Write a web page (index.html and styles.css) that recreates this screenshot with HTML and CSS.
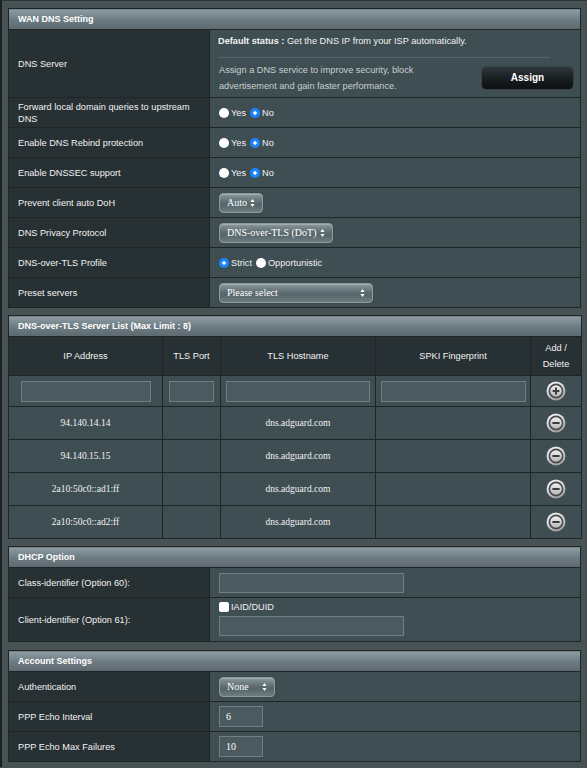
FILE: index.html
```html
<!DOCTYPE html>
<html>
<head>
<meta charset="utf-8">
<link rel="stylesheet" href="styles.css">
</head>
<body>
<div class="page">

  <table class="form">
    <colgroup><col class="c-label"><col></colgroup>
    <tr><th colspan="2" class="sec-head">WAN DNS Setting</th></tr>
    <tr class="dns-row">
      <td class="label">DNS Server</td>
      <td class="value dns-value">
        <div class="status"><b>Default status :</b> Get the DNS IP from your ISP automatically.</div>
        <div class="assign-row">
          <div class="desc">Assign a DNS service to improve security, block<br>advertisement and gain faster performance.</div>
          <button class="assign">Assign</button>
        </div>
      </td>
    </tr>
    <tr>
      <td class="label">Forward local domain queries to upstream DNS</td>
      <td class="value"><span class="radio"></span><span class="opt">Yes</span><span class="radio on"></span><span class="opt">No</span></td>
    </tr>
    <tr>
      <td class="label">Enable DNS Rebind protection</td>
      <td class="value"><span class="radio"></span><span class="opt">Yes</span><span class="radio on"></span><span class="opt">No</span></td>
    </tr>
    <tr>
      <td class="label">Enable DNSSEC support</td>
      <td class="value"><span class="radio"></span><span class="opt">Yes</span><span class="radio on"></span><span class="opt">No</span></td>
    </tr>
    <tr>
      <td class="label">Prevent client auto DoH</td>
      <td class="value"><span class="select w-auto">Auto<svg class="arr" width="5" height="8" viewBox="0 0 5 8"><path d="M2.5 0L4.6 3H0.4z M2.5 8L4.6 5H0.4z" fill="#fff"/></svg></span></td>
    </tr>
    <tr>
      <td class="label">DNS Privacy Protocol</td>
      <td class="value"><span class="select w-dot">DNS-over-TLS (DoT)<svg class="arr" width="5" height="8" viewBox="0 0 5 8"><path d="M2.5 0L4.6 3H0.4z M2.5 8L4.6 5H0.4z" fill="#fff"/></svg></span></td>
    </tr>
    <tr>
      <td class="label">DNS-over-TLS Profile</td>
      <td class="value"><span class="radio on"></span><span class="opt">Strict</span><span class="radio"></span><span class="opt">Opportunistic</span></td>
    </tr>
    <tr>
      <td class="label">Preset servers</td>
      <td class="value"><span class="select w-preset">Please select<svg class="arr" width="5" height="8" viewBox="0 0 5 8"><path d="M2.5 0L4.6 3H0.4z M2.5 8L4.6 5H0.4z" fill="#fff"/></svg></span></td>
    </tr>
  </table>

  <table class="list">
    <colgroup><col class="l1"><col class="l2"><col class="l3"><col class="l4"><col class="l5"></colgroup>
    <tr><th colspan="5" class="sec-head">DNS-over-TLS Server List (Max Limit : 8)</th></tr>
    <tr class="list-head">
      <td>IP Address</td><td>TLS Port</td><td>TLS Hostname</td><td>SPKI Fingerprint</td><td class="adddel">Add /<br>Delete</td>
    </tr>
    <tr class="input-row">
      <td><span class="field f-ip"></span></td>
      <td><span class="field f-port"></span></td>
      <td><span class="field f-host"></span></td>
      <td><span class="field f-spki"></span></td>
      <td><svg class="btn-icon" width="20" height="20" viewBox="0 0 20 20"><use href="#plus"/></svg></td>
    </tr>
    <tr class="data-row"><td>94.140.14.14</td><td></td><td>dns.adguard.com</td><td></td><td><svg class="btn-icon" width="20" height="20" viewBox="0 0 20 20"><use href="#minus"/></svg></td></tr>
    <tr class="data-row"><td>94.140.15.15</td><td></td><td>dns.adguard.com</td><td></td><td><svg class="btn-icon" width="20" height="20" viewBox="0 0 20 20"><use href="#minus"/></svg></td></tr>
    <tr class="data-row"><td>2a10:50c0::ad1:ff</td><td></td><td>dns.adguard.com</td><td></td><td><svg class="btn-icon" width="20" height="20" viewBox="0 0 20 20"><use href="#minus"/></svg></td></tr>
    <tr class="data-row"><td>2a10:50c0::ad2:ff</td><td></td><td>dns.adguard.com</td><td></td><td><svg class="btn-icon" width="20" height="20" viewBox="0 0 20 20"><use href="#minus"/></svg></td></tr>
  </table>

  <table class="form dhcp">
    <colgroup><col class="c-label"><col></colgroup>
    <tr><th colspan="2" class="sec-head">DHCP Option</th></tr>
    <tr>
      <td class="label">Class-identifier (Option 60):</td>
      <td class="value"><span class="field f-dhcp"></span></td>
    </tr>
    <tr class="client-row">
      <td class="label">Client-identifier (Option 61):</td>
      <td class="value">
        <div class="check-line"><span class="checkbox"></span><span class="opt">IAID/DUID</span></div>
        <span class="field f-dhcp"></span>
      </td>
    </tr>
  </table>

  <table class="form">
    <colgroup><col class="c-label"><col></colgroup>
    <tr><th colspan="2" class="sec-head">Account Settings</th></tr>
    <tr>
      <td class="label">Authentication</td>
      <td class="value"><span class="select w-none">None<svg class="arr" width="5" height="8" viewBox="0 0 5 8"><path d="M2.5 0L4.6 3H0.4z M2.5 8L4.6 5H0.4z" fill="#fff"/></svg></span></td>
    </tr>
    <tr>
      <td class="label">PPP Echo Interval</td>
      <td class="value"><span class="field f-num">6</span></td>
    </tr>
    <tr>
      <td class="label">PPP Echo Max Failures</td>
      <td class="value"><span class="field f-num">10</span></td>
    </tr>
  </table>

</div>

<svg class="defs" width="0" height="0">
  <defs>
    <radialGradient id="g-outer" cx="40%" cy="30%" r="75%">
      <stop offset="0" stop-color="#ffffff"/>
      <stop offset="0.6" stop-color="#d6d6d6"/>
      <stop offset="1" stop-color="#8e8e8e"/>
    </radialGradient>
    <linearGradient id="g-inner" x1="0" y1="0" x2="0" y2="1">
      <stop offset="0" stop-color="#f4f4f4"/>
      <stop offset="1" stop-color="#b4b4b4"/>
    </linearGradient>
    <g id="plus">
      <circle cx="10" cy="10" r="9.5" fill="url(#g-outer)"/>
      <circle cx="10" cy="10" r="6.6" fill="url(#g-inner)" stroke="#4a4a4a" stroke-width="1.6"/>
      <path d="M6.6 10H13.4M10 6.6V13.4" stroke="#3c3c3c" stroke-width="2"/>
    </g>
    <g id="minus">
      <circle cx="10" cy="10" r="9.5" fill="url(#g-outer)"/>
      <circle cx="10" cy="10" r="6.6" fill="url(#g-inner)" stroke="#4a4a4a" stroke-width="1.6"/>
      <path d="M6.4 10H13.6" stroke="#3c3c3c" stroke-width="2"/>
    </g>
  </defs>
</svg>
</body>
</html>
```

FILE: styles.css
```css
html, body {
  margin: 0;
  padding: 0;
}
body {
  background: #475255;
  font-family: "Liberation Sans", Arial, sans-serif;
  font-size: 9.2px;
  color: #f2f2f2;
  width: 587px;
  height: 768px;
  overflow: hidden;
}
.page {
  border-left: 2px solid #1c2123;
  border-top: 1px solid #2b3336;
  padding: 7px 0 0 6px;
  height: 767px;
  box-sizing: border-box;
}
table {
  width: 573px;
  border-collapse: collapse;
  table-layout: fixed;
  border: 1px solid #1f2527;
  margin-bottom: 7px;
}
table.dhcp { margin-bottom: 8px; }
.c-label { width: 201px; }
.sec-head {
  height: 20px;
  padding: 0 0 0 9px;
  text-align: left;
  font-weight: bold;
  font-size: 9px;
  color: #ffffff;
  background: linear-gradient(#8d9ca2, #6b7a80 55%, #5c6a70);
  border-bottom: 1px solid #1f2527;
}
td {
  padding: 0;
  vertical-align: middle;
}
.form td {
  height: 29px;
  border-bottom: 1px solid #1f2527;
}
.label {
  background: #273033;
  padding: 0 6px 0 9px;
  border-right: 1px solid #1f2527;
  line-height: 12px;
}
.value {
  background: #3e4e53;
  padding-left: 9px;
}
.dns-row td { height: 67px; }
.dns-value {
  padding: 0 6px 0 8px;
  vertical-align: top;
}
.status {
  height: 27px;
  line-height: 23px;
  border-bottom: 1px solid #56656a;
  margin-right: 24px;
  margin-left: 0;
  white-space: nowrap;
}
.assign-row {
  display: flex;
  justify-content: space-between;
  align-items: center;
  height: 39px;
  padding-left: 1px;
}
.desc {
  color: #c9cfd0;
  line-height: 16px;
}
.assign {
  width: 93px;
  height: 24px;
  border-radius: 5px;
  border: 1px solid #3a4346;
  background: linear-gradient(#30383b, #161b1d 60%, #0d1011);
  color: #ffffff;
  font-family: "Liberation Sans", Arial, sans-serif;
  font-weight: bold;
  font-size: 10px;
  padding: 0;
}
.radio {
  display: inline-block;
  width: 10px;
  height: 10px;
  border-radius: 50%;
  background: #ffffff;
  vertical-align: -2px;
  margin-right: 2px;
}
.radio.on {
  background: radial-gradient(circle, #ffffff 0 1.4px, #1b84ff 2px);
}
.opt { margin-right: 4px; }
.select {
  display: inline-flex;
  align-items: center;
  justify-content: space-between;
  height: 20px;
  box-sizing: border-box;
  border-radius: 4px;
  border: 1px solid #8e9ca0;
  background: linear-gradient(#8a989d, #5f6e73 45%, #56656a 60%, #6e7d82);
  box-shadow: inset 0 1px 1px rgba(255,255,255,0.25), 0 0 1px rgba(0,0,0,0.4);
  font-family: "Liberation Serif", "Times New Roman", serif;
  font-size: 10px;
  color: #ffffff;
  padding: 0 7px 0 7px;
  vertical-align: middle;
}
.w-auto { width: 44px; }
.w-dot { width: 114px; }
.w-preset { width: 154px; }
.w-none { width: 56px; }
.field {
  display: inline-block;
  height: 21px;
  box-sizing: border-box;
  border: 1px solid #6f7f84;
  background: #4a5a5f;
  vertical-align: middle;
}
.f-dhcp { width: 185px; height: 20px; }
.f-num {
  width: 44px;
  font-family: "Liberation Serif", "Times New Roman", serif;
  font-size: 10px;
  line-height: 19px;
  padding-left: 6px;
  color: #ffffff;
}
.client-row td { height: 43px; }
.check-line {
  height: 14px;
  line-height: 12px;
  margin-top: -2px;
}
.checkbox {
  display: inline-block;
  width: 10px;
  height: 10px;
  border-radius: 2px;
  background: #ffffff;
  vertical-align: -2px;
  margin-right: 2px;
}
.client-row .field { margin-top: 1px; }

.l1 { width: 154px; }
.l2 { width: 58px; }
.l3 { width: 155px; }
.l4 { width: 155px; }
.l5 { width: 51px; }
.list td {
  text-align: center;
  border: 1px solid #1f2527;
}
.list-head td {
  height: 38px;
  background: #273033;
  line-height: 16px;
}
.input-row td {
  height: 30px;
  background: #3e4e53;
}
.f-ip { width: 130px; }
.f-port { width: 45px; }
.f-host { width: 144px; }
.f-spki { width: 145px; }
.data-row td {
  height: 32px;
  background: #3e4e53;
  font-family: "Liberation Serif", "Times New Roman", serif;
  font-size: 9.5px;
}
.btn-icon { display: block; margin: 0 auto; }
.defs { position: absolute; width: 0; height: 0; }
```
